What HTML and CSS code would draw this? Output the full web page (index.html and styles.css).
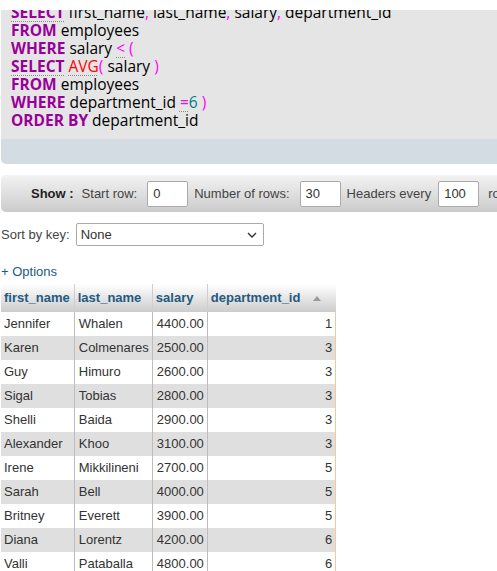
FILE: index.html
```html
<!DOCTYPE html>
<html>
<head>
<meta charset="utf-8">
<link rel="stylesheet" href="styles.css">
</head>
<body>
<div class="page">
  <div class="sql">
    <div class="sql-clip">
<pre class="code"><span class="kw doc">SELECT</span> first_name<span class="p">,</span> last_name<span class="p">,</span> salary<span class="p">,</span> department_id
<span class="kw">FROM</span> employees
<span class="kw">WHERE</span> salary <span class="p doc">&lt;</span> <span class="p">(</span>
<span class="kw doc">SELECT</span> <span class="fn doc">AVG</span><span class="p">(</span> salary <span class="p">)</span>
<span class="kw">FROM</span> employees
<span class="kw">WHERE</span> department_id <span class="p doc">=</span><span class="n">6</span> <span class="p">)</span>
<span class="kw">ORDER BY</span> department_id</pre>
    </div>
    <div class="sql-tools"></div>
  </div>

  <div class="navbar">
    <span class="show">Show :</span>
    <span class="lbl">Start row:</span>
    <input class="num" type="text" value="0">
    <span class="lbl">Number of rows:</span>
    <input class="num" type="text" value="30">
    <span class="lbl lbl-tight">Headers every</span>
    <input class="num num-last" type="text" value="100">
    <span class="lbl">rows</span>
  </div>

  <div class="sortrow">
    <span class="sortlbl">Sort by key:</span>
    <div class="select-wrap">
      <select class="sel"><option>None</option></select>
      <svg class="chev" width="10" height="6" viewBox="0 0 10 6"><path d="M1 1 L5 5 L9 1" fill="none" stroke="#333" stroke-width="1.4"/></svg>
    </div>
  </div>

  <a class="options" href="#">+ Options</a>

  <table class="results">
    <thead>
      <tr>
        <th>first_name</th>
        <th>last_name</th>
        <th>salary</th>
        <th class="sorted">department_id<svg class="arrow" width="8" height="5" viewBox="0 0 8 5"><path d="M0 5 L4 0 L8 5 Z" fill="#9a9a9a"/></svg></th>
      </tr>
    </thead>
    <tbody>
      <tr><td>Jennifer</td><td>Whalen</td><td>4400.00</td><td class="r">1</td></tr>
      <tr><td>Karen</td><td>Colmenares</td><td>2500.00</td><td class="r">3</td></tr>
      <tr><td>Guy</td><td>Himuro</td><td>2600.00</td><td class="r">3</td></tr>
      <tr><td>Sigal</td><td>Tobias</td><td>2800.00</td><td class="r">3</td></tr>
      <tr><td>Shelli</td><td>Baida</td><td>2900.00</td><td class="r">3</td></tr>
      <tr><td>Alexander</td><td>Khoo</td><td>3100.00</td><td class="r">3</td></tr>
      <tr><td>Irene</td><td>Mikkilineni</td><td>2700.00</td><td class="r">5</td></tr>
      <tr><td>Sarah</td><td>Bell</td><td>4000.00</td><td class="r">5</td></tr>
      <tr><td>Britney</td><td>Everett</td><td>3900.00</td><td class="r">5</td></tr>
      <tr><td>Diana</td><td>Lorentz</td><td>4200.00</td><td class="r">6</td></tr>
      <tr><td>Valli</td><td>Pataballa</td><td>4800.00</td><td class="r">6</td></tr>
    </tbody>
  </table>
</div>
</body>
</html>
```

FILE: styles.css
```css
html, body {
  margin: 0;
  padding: 0;
  overflow: hidden;
  background: #fff;
}
body {
  font-family: "Liberation Sans", Arial, sans-serif;
  font-size: 13px;
  color: #444;
}
.page {
  width: 620px;
  padding-top: 10px;
}

/* SQL box */
.sql {
  margin-left: 1px;
}
.sql-clip {
  height: 129px;
  overflow: hidden;
  background: #e5e5e5;
}
.code {
  margin: -7px 0 0 10px;
  font-family: "Open Sans", "DejaVu Sans", sans-serif;
  font-size: 15.5px;
  line-height: 18px;
  color: #000;
  white-space: pre;
}
.kw {
  color: #990099;
  font-weight: bold;
}
.p {
  color: #ff00ff;
}
.fn {
  color: #ff0000;
}
.n {
  color: #008080;
}
.doc {
  text-decoration-line: underline;
  text-decoration-style: dotted;
  text-decoration-color: #8a8a8a;
  text-decoration-thickness: 1px;
  text-underline-offset: 3px;
}
.sql-tools {
  height: 25px;
  background: #d3dce3;
  border-bottom-left-radius: 5px;
}

/* navigation bar */
.navbar {
  margin: 11px 0 0 1px;
  height: 37px;
  display: flex;
  align-items: center;
  padding-left: 30px;
  background: linear-gradient(#f3f3f3, #cbcbcb);
  border-radius: 5px 0 0 5px;
  white-space: nowrap;
}
.show {
  font-weight: bold;
  color: #222;
  margin-right: 8px;
}
.lbl {
  margin-right: 10px;
}
.lbl-tight {
  margin-right: 7px;
}
.num {
  box-sizing: border-box;
  width: 41px;
  height: 26px;
  border: 1px solid #aaa;
  border-radius: 2px;
  padding: 0 5px;
  margin: 0 6px 0 0;
  background: #fff;
  font-family: "Liberation Sans", Arial, sans-serif;
  font-size: 13px;
  color: #333;
}
.num-last {
  margin-right: 9px;
}

/* sort by key */
.sortrow {
  margin-top: 11px;
  display: flex;
  align-items: center;
}
.sortlbl {
  margin: 0 6px 0 1px;
}
.select-wrap {
  position: relative;
  width: 188px;
  height: 23px;
}
.sel {
  appearance: none;
  -webkit-appearance: none;
  box-sizing: border-box;
  width: 188px;
  height: 23px;
  margin: 0;
  padding: 0 4px;
  border: 1px solid #aaa;
  border-radius: 2px;
  background: #fff;
  font-family: "Liberation Sans", Arial, sans-serif;
  font-size: 13px;
  color: #333;
}
.chev {
  position: absolute;
  right: 7px;
  top: 9px;
}

/* options link */
.options {
  display: block;
  margin: 18px 0 0 1px;
  line-height: 16px;
  color: #235a81;
  text-decoration: none;
}

/* results table */
.results {
  margin: 4px 0 0 1px;
  border-collapse: collapse;
}
.results th {
  background: linear-gradient(#ffffff, #cccccc);
  color: #235a81;
  font-weight: bold;
  text-align: left;
  padding: 6px 3px 6px 3px;
  line-height: 16px;
  border-right: 1px solid #cfcfcf;
}
.results th:first-child,
.results td:first-child {
  padding-right: 4px;
}
.results th.sorted {
  width: 122px;
  border-right: none;
}
.arrow {
  margin-left: 13px;
  vertical-align: 1px;
}
.results td {
  padding: 4px 3px 4px 3px;
  line-height: 16px;
  color: #333;
  border-right: 1px solid #bdbdbd;
  white-space: nowrap;
}
.results td:nth-child(2),
.results td:nth-child(3) {
  padding-left: 4px;
}
.results tbody tr:nth-child(even) td {
  background: #dfdfdf;
}
.results td.r {
  text-align: right;
  border-right: 1px solid #fcc795;
}
```
